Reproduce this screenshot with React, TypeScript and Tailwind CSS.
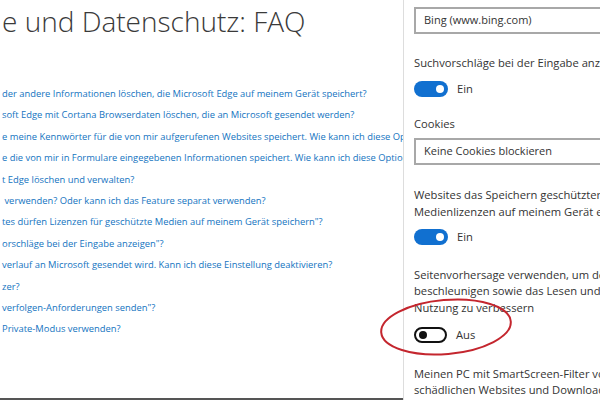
import React from 'react';

const links = [
	'der andere Informationen löschen, die Microsoft Edge auf meinem Gerät speichert?',
	'soft Edge mit Cortana Browserdaten löschen, die an Microsoft gesendet werden?',
	'e meine Kennwörter für die von mir aufgerufenen Websites speichert. Wie kann ich diese Option deaktivieren?',
	'e die von mir in Formulare eingegebenen Informationen speichert. Wie kann ich diese Option deaktivieren?',
	't Edge löschen und verwalten?',
	' verwenden? Oder kann ich das Feature separat verwenden?',
	'tes dürfen Lizenzen für geschützte Medien auf meinem Gerät speichern"?',
	'orschläge bei der Eingabe anzeigen"?',
	'verlauf an Microsoft gesendet wird. Kann ich diese Einstellung deaktivieren?',
	'zer?',
	'verfolgen-Anforderungen senden"?',
	'Private-Modus verwenden?',
];

function Toggle({ on }: { on: boolean }) {
	return on ? (
		<div className="flex h-[16px] w-[34px] items-center justify-end rounded-full bg-[#1170d0] pr-[4px]">
			<div className="h-[8px] w-[8px] rounded-full bg-white" />
		</div>
	) : (
		<div className="flex h-[16px] w-[33px] items-center rounded-full border-2 border-[#111] pl-[3px]">
			<div className="h-[8px] w-[8px] rounded-full bg-[#111]" />
		</div>
	);
}

function Select({ label }: { label: string }) {
	return (
		<div className="flex h-[27px] w-[200px] items-center border-2 border-[#a8a8a8] px-[8px] text-[11px] text-[#333]">
			{label}
		</div>
	);
}

export default function App() {
	return (
		<div className="relative flex h-[400px] w-[600px] overflow-hidden bg-white font-['Open_Sans',sans-serif]">
			{/* FAQ page, scrolled so its left side is cut */}
			<div className="w-[403px] shrink-0 overflow-hidden border-b-2 border-[#555] pl-[2px]">
				<h1 className="mt-[2px] whitespace-nowrap text-[28px] leading-[38px] font-light text-[#3a3a3a]">
					e und Datenschutz: FAQ
				</h1>
				<ul className="mt-[43px]">
					{links.map((l, i) => (
						<li
							key={i}
							className="whitespace-pre text-[9.4px] leading-[21.4px] font-medium text-[#1474bf]"
						>
							{l}
						</li>
					))}
				</ul>
			</div>

			{/* settings pane */}
			<div className="flex-1 overflow-hidden border-l border-[#ddd] pl-[10px] text-[11.2px] whitespace-nowrap text-[#333]">
				<div className="mt-[7px]">
					<Select label="Bing (www.bing.com)" />
				</div>
				<p className="mt-[21px] leading-[16px]">Suchvorschläge bei der Eingabe anzeigen</p>
				<div className="mt-[10px] flex items-center gap-[9px]">
					<Toggle on />
					<span>Ein</span>
				</div>
				<p className="mt-[18px] leading-[16px]">Cookies</p>
				<div className="mt-[6px]">
					<Select label="Keine Cookies blockieren" />
				</div>
				<p className="mt-[21px] leading-[17px]">
					Websites das Speichern geschützter
					<br />
					Medienlizenzen auf meinem Gerät erlauben
				</p>
				<div className="mt-[9px] flex items-center gap-[9px]">
					<Toggle on />
					<span>Ein</span>
				</div>
				<p className="mt-[21px] leading-[16.5px]">
					Seitenvorhersage verwenden, um den Browser zu
					<br />
					beschleunigen sowie das Lesen und die allgemeine
					<br />
					Nutzung zu verbessern
				</p>
				<div className="mt-[11px] flex items-center gap-[9px]">
					<Toggle on={false} />
					<span>Aus</span>
				</div>
				<p className="mt-[22px] leading-[16px]">
					Meinen PC mit SmartScreen-Filter vor
					<br />
					schädlichen Websites und Downloads schützen
				</p>
			</div>

			{/* red annotation ring */}
			<svg className="absolute left-0 top-0" width="600" height="400" viewBox="0 0 600 400">
				<ellipse
					cx="446"
					cy="327"
					rx="65"
					ry="27"
					transform="rotate(-5 446 327)"
					fill="none"
					stroke="#c4262e"
					strokeWidth="2"
				/>
			</svg>
		</div>
	);
}
